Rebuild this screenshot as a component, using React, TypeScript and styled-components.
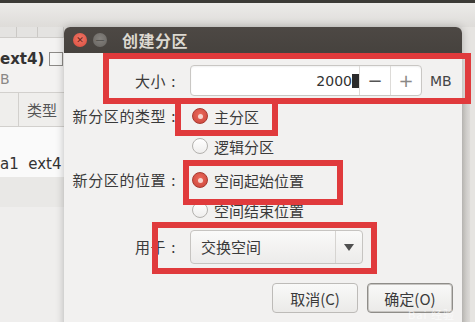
import React from 'react';
import styled, {createGlobalStyle} from 'styled-components';

const GlobalStyle = createGlobalStyle`
  html, body {
    margin: 0;
    padding: 0;
    background: #dcdad6;
  }
  body {
    font-family: "Noto Sans CJK SC", "Noto Sans", sans-serif;
  }
`;

const Desktop = styled.div`
  position: relative;
  width: 475px;
  height: 322px;
  overflow: hidden;
  display: flex;
  flex-direction: column;
  background: #e2e0dd;
`;

const TopStrip = styled.div`
  height: 3px;
  background: #3c3b37;
`;

const Toolbar = styled.div`
  height: 24px;
  background: linear-gradient(#ecebe9, #dedcd9);
`;

const BackWindow = styled.div`
  flex: 1;
  display: flex;
`;

const LeftPane = styled.div`
  width: 64px;
  display: flex;
  flex-direction: column;
  background: #f3f2f1;
  color: #3c3c3c;
`;

const HeaderStrip = styled.div`
  height: 10px;
  display: grid;
  grid-template-columns: 17px 21px 1fr;
  background: #e4e3e1;
  border-bottom: 1px solid #cfcdca;

  span {
    border-right: 1px solid #cbc9c6;
  }
`;

const Info = styled.div`
  height: 54px;
  display: flex;
  flex-direction: column;
  padding-top: 10px;
  box-sizing: border-box;
`;

const InfoLine = styled.div`
  display: flex;
  align-items: center;
  justify-content: space-between;
  height: 22px;

  b {
    font-family: "DejaVu Sans", sans-serif;
    font-size: 15px;
    font-weight: 700;
    color: #333;
  }
`;

const CheckBox = styled.span`
  width: 12px;
  height: 12px;
  margin-right: 1px;
  border: 1px solid #8c8a87;
  background: #f6f6f5;
`;

const Small = styled.div`
  font-family: "DejaVu Sans", sans-serif;
  font-size: 14px;
  color: #8a8886;
  line-height: 18px;
`;

const TableHead = styled.div`
  height: 33px;
  display: grid;
  grid-template-columns: 19px 1fr;
  border-top: 1px solid #d2d0cd;
  border-bottom: 1px solid #d2d0cd;
  background: #efeeec;

  span:first-child {
    border-right: 1px solid #d2d0cd;
  }
  span:last-child {
    padding-left: 8px;
    line-height: 33px;
    font-size: 15px;
    color: #555;
  }
`;

const TableRow = styled.div`
  height: 50px;
  display: flex;
  align-items: flex-end;
  padding-bottom: 4px;
  box-sizing: border-box;
  background: #fafafa;
  font-family: "DejaVu Sans", sans-serif;
  font-size: 15px;
  color: #333;
  white-space: nowrap;
`;

const PaneRest = styled.div`
  flex: 1;
  background: linear-gradient(#e9e8e6 0 30px, #efeeed 30px);
`;

const Gap = styled.div`
  flex: 1;
`;

const RightEdge = styled.div`
  width: 13px;
  display: flex;
  flex-direction: column;
  background: #e6e4e1;

  span {
    margin-top: 72px;
    flex: 1;
    width: 8px;
    background: linear-gradient(90deg, #cfcdc9, #dddbd8);
  }
`;

/* dialog window floating over the desktop */
const Dialog = styled.div`
  position: absolute;
  left: 64px;
  top: 27px;
  width: 398px;
  height: 310px;
  display: flex;
  flex-direction: column;
  border-radius: 6px 6px 0 0;
  overflow: hidden;
  background: #f2f1f0;
  box-shadow: 0 0 8px rgba(0, 0, 0, 0.25);
`;

const TitleBar = styled.div`
  height: 26px;
  display: flex;
  align-items: center;
  gap: 6px;
  padding-left: 9px;
  background: linear-gradient(#4d4844, #46423e);
`;

const WinButton = styled.span<{ $close?: boolean }>`
  width: 14px;
  height: 14px;
  border-radius: 50%;
  display: flex;
  align-items: center;
  justify-content: center;
  background: ${p => (p.$close ? 'radial-gradient(circle at 50% 40%, #f07868, #d94a3c)' : 'radial-gradient(circle at 50% 40%, #85827e, #66635f)')};
  color: ${p => (p.$close ? '#6a1f18' : '#3a3835')};
  font-family: "DejaVu Sans", sans-serif;
  font-size: 9px;
  line-height: 1;
`;

const Title = styled.span`
  margin-left: 9px;
  font-size: 16px;
  font-weight: 700;
  color: #dcd8d0;
  letter-spacing: 0.5px;
`;

const Form = styled.div`
  display: grid;
  grid-template-columns: 112px auto;
  column-gap: 14px;
  row-gap: 6px;
  padding: 12px 9px 0 0;
  color: #3a3a3a;
  font-size: 15px;
`;

const Label = styled.div<{ $h: number }>`
  text-align: right;
  line-height: ${p => p.$h}px;
  white-space: nowrap;
  letter-spacing: 0.6px;

  i {
    font-style: normal;
    margin-left: 5px;
  }
`;

const SizeRow = styled.div`
  display: flex;
  align-items: center;
  gap: 8px;
`;

const Spin = styled.div`
  width: 232px;
  height: 31px;
  box-sizing: border-box;
  display: flex;
  border: 1px solid #c9c7c4;
  border-radius: 4px;
  background: #ffffff;
  box-shadow: inset 0 1px 2px rgba(0, 0, 0, 0.06);
`;

const SpinValue = styled.div`
  flex: 1;
  display: flex;
  align-items: center;
  justify-content: flex-end;
  font-family: "DejaVu Sans", sans-serif;
  font-size: 14px;
  color: #333;
`;

const Caret = styled.span`
  width: 7px;
  height: 14px;
  background: #2a2a2a;
`;

const SpinButton = styled.span<{ $dark?: boolean }>`
  width: 30px;
  display: flex;
  align-items: center;
  justify-content: center;
  border-left: 1px solid #dddbd8;
  font-family: "DejaVu Sans", sans-serif;
  font-size: 18px;
  color: ${p => (p.$dark ? '#555' : '#8a8886')};
`;

const Unit = styled.span`
  font-family: "DejaVu Sans", sans-serif;
  font-size: 14px;
  color: #444;
`;

const RadioGroup = styled.div`
  display: flex;
  flex-direction: column;
  gap: 2px;
`;

const RadioItem = styled.label`
  height: 28px;
  display: flex;
  align-items: center;
  gap: 6px;
  padding-left: 2px;
  white-space: nowrap;
`;

const RadioDot = styled.span<{ $on?: boolean }>`
  width: 16px;
  height: 16px;
  box-sizing: border-box;
  border-radius: 50%;
  display: flex;
  align-items: center;
  justify-content: center;
  border: 1px solid ${p => (p.$on ? '#a8382f' : '#b3b1ae')};
  background: ${p => (p.$on ? 'radial-gradient(circle at 50% 40%, #ec6a5c, #c9443a)' : 'linear-gradient(#ffffff, #efeeed)')};

  &::after {
    content: '';
    display: ${p => (p.$on ? 'block' : 'none')};
    width: 5px;
    height: 5px;
    border-radius: 50%;
    background: #f7d6d0;
  }
`;

const Combo = styled.div`
  width: 173px;
  height: 34px;
  box-sizing: border-box;
  display: flex;
  border: 1px solid #c6c4c1;
  border-radius: 4px;
  background: linear-gradient(#fafaf9, #ecebea);

  span:first-child {
    flex: 1;
    padding-left: 10px;
    line-height: 32px;
  }
`;

const ComboArrow = styled.span`
  width: 26px;
  display: flex;
  align-items: center;
  justify-content: center;
  border-left: 1px solid #d6d4d1;

  &::after {
    content: '';
    border-left: 5px solid transparent;
    border-right: 5px solid transparent;
    border-top: 7px solid #505050;
  }
`;

const Buttons = styled.div`
  grid-column: 1 / 3;
  display: flex;
  justify-content: flex-end;
  gap: 9px;
  margin-top: 13px;
`;

const Button = styled.button<{ $default?: boolean }>`
  width: 86px;
  height: 30px;
  border-radius: 4px;
  border: 1px solid ${p => (p.$default ? '#8f8d89' : '#bdbbb8')};
  box-shadow: ${p => (p.$default ? 'inset 0 0 0 1px #c7c5c2' : 'none')};
  background: linear-gradient(#f9f9f8, #ebeae8);
  font-family: "Noto Sans CJK SC", "Noto Sans", sans-serif;
  font-size: 15px;
  color: #3a3a3a;
  padding: 0;
`;

/* red annotation rectangles drawn over the screenshot */
const Mark = styled.div<{ $x: number; $y: number; $w: number; $h: number }>`
  position: absolute;
  left: ${p => p.$x}px;
  top: ${p => p.$y}px;
  width: ${p => p.$w}px;
  height: ${p => p.$h}px;
  box-sizing: border-box;
  border: 6px solid #e03a3c;
  pointer-events: none;
`;

const Watermark = styled.div`
  position: absolute;
  right: 20px;
  bottom: 1px;
  font-size: 11px;
  line-height: 13px;
  color: rgba(255, 255, 255, 0.6);
  letter-spacing: 1px;
`;

const marks = [
    {x: 103, y: 53, w: 368, h: 51},
    {x: 175, y: 98, w: 103, h: 38},
    {x: 183, y: 160, w: 160, h: 45},
    {x: 152, y: 222, w: 225, h: 52},
];

export default function App() {
    return (
        <>
            <GlobalStyle/>
            <Desktop>
                <TopStrip/>
                <Toolbar/>
                <BackWindow>
                    <LeftPane>
                        <HeaderStrip><span/><span/><span/></HeaderStrip>
                        <Info>
                            <InfoLine>
                                <b>ext4)</b>
                                <CheckBox/>
                            </InfoLine>
                            <Small>B</Small>
                        </Info>
                        <TableHead><span/><span>类型</span></TableHead>
                        <TableRow>a1&nbsp;&nbsp;ext4</TableRow>
                        <PaneRest/>
                    </LeftPane>
                    <Gap/>
                    <RightEdge><span/></RightEdge>
                </BackWindow>

                <Dialog>
                    <TitleBar>
                        <WinButton $close>✕</WinButton>
                        <WinButton>—</WinButton>
                        <Title>创建分区</Title>
                    </TitleBar>
                    <Form>
                        <Label $h={31}>大小<i>:</i></Label>
                        <SizeRow>
                            <Spin>
                                <SpinValue>2000<Caret/></SpinValue>
                                <SpinButton $dark>−</SpinButton>
                                <SpinButton>+</SpinButton>
                            </Spin>
                            <Unit>MB</Unit>
                        </SizeRow>

                        <Label $h={28}>新分区的类型<i>:</i></Label>
                        <RadioGroup>
                            <RadioItem><RadioDot $on/>主分区</RadioItem>
                            <RadioItem><RadioDot/>逻辑分区</RadioItem>
                        </RadioGroup>

                        <Label $h={28}>新分区的位置<i>:</i></Label>
                        <RadioGroup>
                            <RadioItem><RadioDot $on/>空间起始位置</RadioItem>
                            <RadioItem><RadioDot/>空间结束位置</RadioItem>
                        </RadioGroup>

                        <Label $h={34}>用于<i>:</i></Label>
                        <Combo>
                            <span>交换空间</span>
                            <ComboArrow/>
                        </Combo>

                        <Buttons>
                            <Button>取消(C)</Button>
                            <Button $default>确定(O)</Button>
                        </Buttons>
                    </Form>
                </Dialog>

                {marks.map((m, key) => (
                    <Mark key={key} $x={m.x} $y={m.y} $w={m.w} $h={m.h}/>
                ))}
                <Watermark>Bai 经验</Watermark>
            </Desktop>
        </>
    );
}
